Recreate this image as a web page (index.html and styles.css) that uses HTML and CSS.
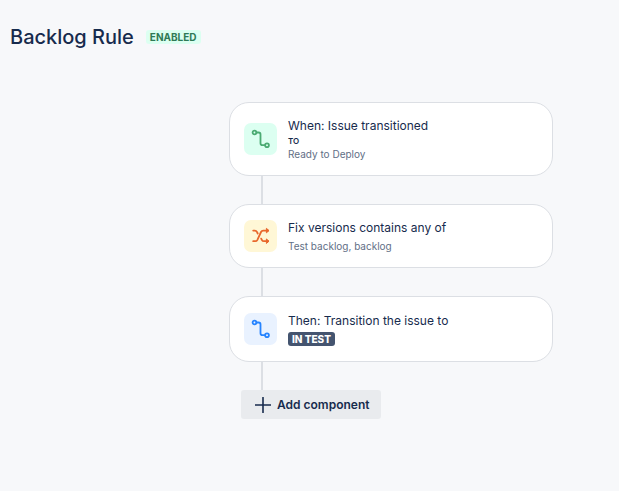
FILE: index.html
```html
<!DOCTYPE html>
<html lang="en">
<head>
<meta charset="utf-8">
<meta name="viewport" content="width=device-width, initial-scale=1">
<title>Backlog Rule</title>
<link rel="stylesheet" href="styles.css">
</head>
<body>
<header class="header">
  <h1 class="title">Backlog Rule</h1>
  <span class="status">ENABLED</span>
</header>
<main class="flow">
  <section class="card card-trigger">
    <span class="icon icon-green">
      <svg viewBox="0 0 20 20" aria-hidden="true"><circle cx="3.5" cy="3.5" r="1.9"/><path d="M5.5 3.5H7.6Q9.5 3.5 9.5 5.4V14.3Q9.5 16.2 11.4 16.2H14"/><circle cx="16" cy="16.2" r="1.9"/></svg>
    </span>
    <div class="text">
      <h2 class="name">When: Issue transitioned</h2>
      <p class="direction">TO</p>
      <p class="detail">Ready to Deploy</p>
    </div>
  </section>
  <div class="connector"></div>
  <section class="card card-condition">
    <span class="icon icon-yellow">
      <svg viewBox="0 0 20 20" aria-hidden="true"><path d="M2.2 4.6H3.8Q5.3 4.6 6.1 6.2L6.7 7.5M10.2 12.6L10.8 13.8Q11.5 15.2 13 15.2H17M2.2 15.2H4.2Q5.7 15.2 6.4 13.8L10 6Q10.7 4.6 12.2 4.6H17"/><path class="head" d="M15.7 2.6L18 4.6L15.7 6.6ZM15.7 13.2L18 15.2L15.7 17.2Z"/></svg>
    </span>
    <div class="text">
      <h2 class="name">Fix versions contains any of</h2>
      <p class="detail detail-spaced">Test backlog, backlog</p>
    </div>
  </section>
  <div class="connector"></div>
  <section class="card card-action">
    <span class="icon icon-blue">
      <svg viewBox="0 0 20 20" aria-hidden="true"><circle cx="3.5" cy="3.5" r="1.9"/><path d="M5.5 3.5H7.6Q9.5 3.5 9.5 5.4V14.3Q9.5 16.2 11.4 16.2H14"/><circle cx="16" cy="16.2" r="1.9"/></svg>
    </span>
    <div class="text">
      <h2 class="name">Then: Transition the issue to</h2>
      <span class="badge">IN TEST</span>
    </div>
  </section>
  <div class="connector"></div>
  <button class="add" type="button">
    <svg viewBox="0 0 16 16" aria-hidden="true"><path d="M8 0.5V15.5M0.5 8H15.5"/></svg>
    <span>Add component</span>
  </button>
</main>
</body>
</html>
```
FILE: styles.css
```css
* {
  box-sizing: border-box;
}

body {
  margin: 0;
  background: #f7f8fa;
  color: #172b4d;
  font-family: Inter, "Liberation Sans", sans-serif;
}

h1, h2, p {
  margin: 0;
}

.header {
  display: flex;
  align-items: center;
  gap: 12px;
  padding: 23px 10px 0;
}

.title {
  font-size: 20px;
  line-height: 28px;
  font-weight: 500;
}

.status {
  padding: 0 4px;
  border-radius: 3px;
  background: #dcfff1;
  color: #2f7a55;
  font-size: 10px;
  line-height: 14px;
  font-weight: 700;
}

.flow {
  display: flex;
  flex-direction: column;
  align-items: stretch;
  padding: 51px 66px 24px 229px;
}

.card {
  display: flex;
  align-items: center;
  gap: 11px;
  padding: 14px;
  border: 1px solid #dcdfe4;
  border-radius: 20px;
  background: #fff;
}

.card-trigger {
  min-height: 74px;
}

.card-condition {
  min-height: 64px;
}

.card-action {
  min-height: 66px;
}

.icon {
  display: flex;
  flex: none;
  align-items: center;
  justify-content: center;
  width: 33px;
  height: 32px;
  border-radius: 7px;
}

.icon svg {
  width: 20px;
  height: 20px;
  fill: none;
  stroke: currentColor;
  stroke-width: 1.8;
  stroke-linecap: round;
  stroke-linejoin: round;
}

.icon .head {
  fill: currentColor;
  stroke-width: 1;
}

.icon-green {
  background: #dcfff1;
  color: #4bab73;
}

.icon-yellow {
  background: #fff7d6;
  color: #e8672c;
}

.icon-blue {
  background: #e9f2ff;
  color: #2684ff;
}

.name {
  font-size: 12px;
  line-height: 18px;
  font-weight: 400;
}

.direction {
  font-size: 8px;
  line-height: 12px;
  font-weight: 600;
}

.detail {
  color: #626f86;
  font-size: 10px;
  line-height: 14px;
}

.detail-spaced {
  margin-top: 2px;
}

.badge {
  display: block;
  width: fit-content;
  margin-top: 2px;
  padding: 0 4px;
  border-radius: 3px;
  background: #44546f;
  color: #fff;
  font-size: 10px;
  line-height: 14px;
  font-weight: 800;
}

.connector {
  width: 2px;
  height: 28px;
  margin-left: 32px;
  background: #dcdfe4;
}

.add {
  display: flex;
  align-items: center;
  align-self: flex-start;
  gap: 6px;
  height: 29px;
  margin-left: 12px;
  padding: 0 12px 0 14px;
  border: 0;
  border-radius: 3px;
  background: #e9ebee;
  color: #172b4d;
  font: 600 12px/20px Inter, "Liberation Sans", sans-serif;
}

.add svg {
  width: 16px;
  height: 16px;
  fill: none;
  stroke: currentColor;
  stroke-width: 1.6;
  stroke-linecap: round;
}
```
